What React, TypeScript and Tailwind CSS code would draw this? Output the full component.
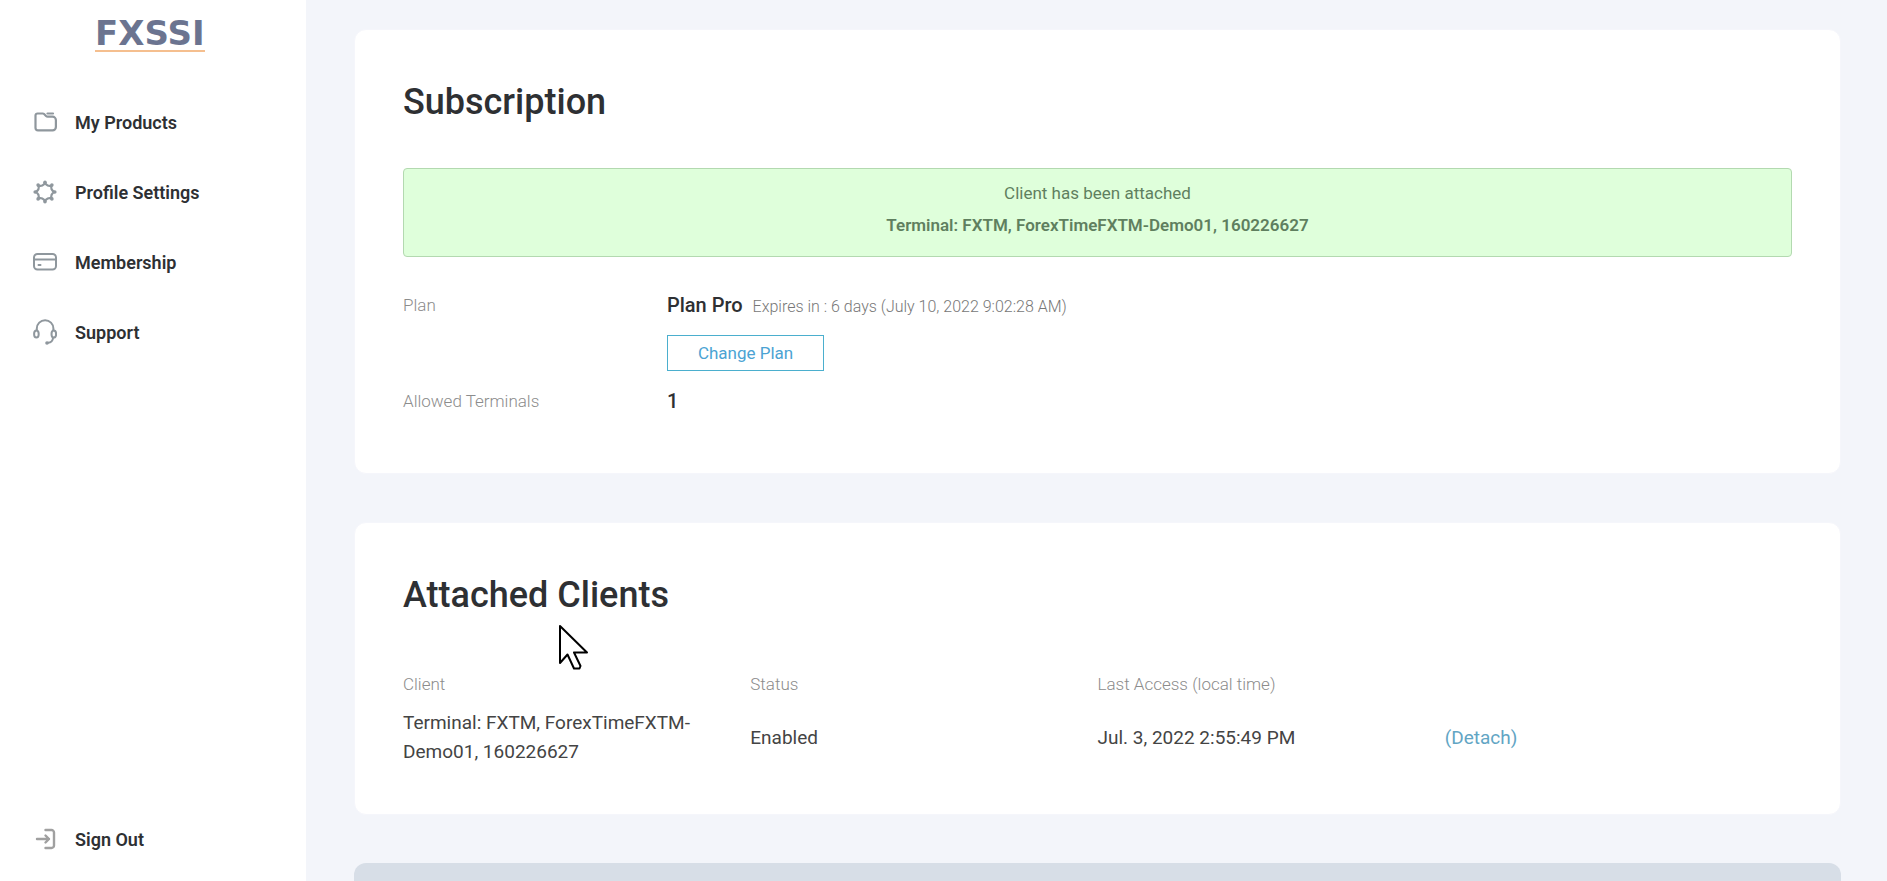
import React from "react";

const iconProps = {
  width: 24,
  height: 26,
  viewBox: "0 0 24 26",
  fill: "none",
  stroke: "#8f979d",
  strokeWidth: 2,
  strokeLinecap: "round" as const,
  strokeLinejoin: "round" as const,
  "aria-hidden": true
};

const FolderIcon = () => (
  <svg {...iconProps} strokeWidth={2.2}>
    <path d="M2.5 19V6.5a2 2 0 0 1 2-2h5.2a2 2 0 0 1 1.4.6L13 7a2.5 2.5 0 0 0 1.8.7h4.7a3.4 3.4 0 0 1 3.4 3.4V18a3.4 3.4 0 0 1-3.4 3.4H5A2.5 2.5 0 0 1 2.5 19z" />
    <path d="M14.5 4.5H20" />
  </svg>
);

const gearTips = [
  [12, 3.2],
  [18.9, 6.1],
  [21.8, 13],
  [18.9, 19.9],
  [12, 22.8],
  [5.1, 19.9],
  [2.2, 13],
  [5.1, 6.1]
];

const GearIcon = () => (
  <svg {...iconProps} strokeWidth={2.2}>
    <path d="M12 3.2A4.6 4.6 0 0 0 18.9 6.1A4.6 4.6 0 0 0 21.8 13A4.6 4.6 0 0 0 18.9 19.9A4.6 4.6 0 0 0 12 22.8A4.6 4.6 0 0 0 5.1 19.9A4.6 4.6 0 0 0 2.2 13A4.6 4.6 0 0 0 5.1 6.1A4.6 4.6 0 0 0 12 3.2z" />
    {gearTips.map(([cx, cy]) => (
      <circle key={`${cx}-${cy}`} cx={cx} cy={cy} r="1.8" fill="#8f979d" stroke="none" />
    ))}
  </svg>
);

const CardIcon = () => (
  <svg {...iconProps}>
    <rect x="1" y="5" width="22" height="15.5" rx="3.5" />
    <path d="M1.5 10.5h21M5.5 16h2" />
  </svg>
);

const HeadsetIcon = () => (
  <svg {...iconProps}>
    <path d="M3.8 11V9.5a8.2 8.2 0 0 1 16.6 0V11" />
    <ellipse cx="3.4" cy="15" rx="2.3" ry="3.6" />
    <ellipse cx="20.8" cy="15" rx="2.3" ry="3.6" />
    <path d="M20 19c-.2 3-2 4.6-5 4.8" />
    <circle cx="14" cy="24" r="1.8" fill="#8f979d" stroke="none" />
  </svg>
);

const SignOutIcon = () => (
  <svg {...iconProps} stroke="#a0a0a0" strokeWidth={2.4}>
    <path d="M12.5 4h6A2.5 2.5 0 0 1 21 6.5v13a2.5 2.5 0 0 1-2.5 2.5h-6" />
    <path d="M4 13h12M12.5 9.5L16 13l-3.5 3.5" />
  </svg>
);

const menu = [
  { label: "My Products", icon: FolderIcon },
  { label: "Profile Settings", icon: GearIcon },
  { label: "Membership", icon: CardIcon },
  { label: "Support", icon: HeadsetIcon }
];

interface NavLinkProps {
  label: string;
  icon: React.FC;
}

const NavLink: React.FC<NavLinkProps> = ({ label, icon: Icon }) => (
  <a href="#" className="flex h-[70px] items-center gap-[18px] pl-[33px] text-[18px] font-semibold text-[#2e3033]">
    <Icon />
    <span>{label}</span>
  </a>
);

const Card: React.FC<{ title: string; children: React.ReactNode }> = ({ title, children }) => (
  <section className="rounded-xl border border-[#f5f6fb] bg-white p-12">
    <h2 className="mb-[42px] text-[36px] leading-12 font-medium text-[#2e3033]">{title}</h2>
    {children}
  </section>
);

const Cursor = () => (
  <svg className="absolute top-[624px] left-[558px]" width="32" height="48" viewBox="0 0 32 48" aria-hidden="true">
    <path d="M2 2v37l7.5-8.500 6.500 14h5.500l1-2.500-6.500-13.500H29z" fill="#fff" stroke="#000" strokeWidth="2" strokeLinejoin="round" />
  </svg>
);

export default function App() {
  return (
    <div className="relative flex min-h-screen bg-[#f3f5fa] font-[Roboto,sans-serif]">
      <aside className="sticky top-0 flex h-screen w-[306px] shrink-0 flex-col bg-white pb-[7px]">
        <a
          href="#"
          className="mt-4 mb-[35px] ml-[95px] self-start border-b-2 border-[#f5bf8f] font-['DejaVu_Sans',sans-serif] text-[34px] leading-[34px] font-bold text-[#6b7490]"
        >
          FXSSI
        </a>
        <nav className="flex flex-col">
          {menu.map(item => (
            <NavLink key={item.label} {...item} />
          ))}
        </nav>
        <div className="mt-auto">
          <NavLink label="Sign Out" icon={SignOutIcon} />
        </div>
      </aside>

      <main className="flex min-w-0 flex-1 flex-col gap-12 pt-[29px] pr-[46px] pl-12">
        <Card title="Subscription">
          <div
            role="status"
            className="mb-8 rounded border border-[#b3d9b0] bg-[#dfffdb] pt-2 pb-[15px] text-center text-[17px] leading-8 text-[#5f7f5f]"
          >
            <p>Client has been attached</p>
            <p className="font-semibold">Terminal: FXTM, ForexTimeFXTM-Demo01, 160226627</p>
          </div>
          <dl className="grid grid-cols-[19%_1fr] gap-y-3.5 pb-2 text-[17px] leading-8">
            <dt className="font-light text-[#8c8c8c]">Plan</dt>
            <dd>
              <p>
                <span className="mr-2.5 text-[20px] font-medium text-[#2e3033]">Plan Pro</span>
                <span className="text-base font-light text-[#777]">Expires in : 6 days (July 10, 2022 9:02:28 AM)</span>
              </p>
              <button
                type="button"
                className="mt-[13px] block h-9 border border-[#4bafce] px-[30px] text-[17px] leading-8 text-[#4ba3d3]"
              >
                Change Plan
              </button>
            </dd>
            <dt className="font-light text-[#8c8c8c]">Allowed Terminals</dt>
            <dd className="text-[20px] font-medium text-[#2e3033]">1</dd>
          </dl>
        </Card>

        <Card title="Attached Clients">
          <table className="w-full table-fixed text-left text-[19px] leading-[29px] text-[#444]">
            <thead>
              <tr className="h-[47px] text-[17px] text-[#8c8c8c]">
                <th className="font-light">Client</th>
                <th className="font-light">Status</th>
                <th className="font-light">Last Access (local time)</th>
                <th aria-label="Actions" />
              </tr>
            </thead>
            <tbody>
              <tr>
                <td className="pr-12">Terminal: FXTM, ForexTimeFXTM-Demo01, 160226627</td>
                <td>Enabled</td>
                <td>Jul. 3, 2022 2:55:49 PM</td>
                <td>
                  <a href="#" className="text-[#62a5c4]">
                    (Detach)
                  </a>
                </td>
              </tr>
            </tbody>
          </table>
        </Card>

        <div className="flex-1 rounded-t-xl bg-[#d7dee7]" />
      </main>

      <Cursor />
    </div>
  );
}
